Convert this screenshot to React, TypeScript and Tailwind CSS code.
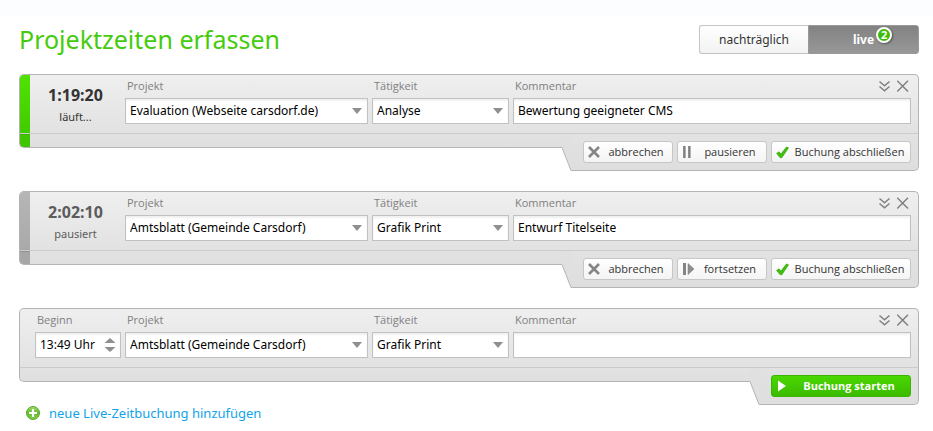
import { useId, useState } from "react";
import type { ReactNode } from "react";

type BookingStatus = "running" | "paused" | "new";

const BAR_UPPER: Record<BookingStatus, string> = {
  running: "bg-linear-to-b from-[#4fe300] to-[#42cb00]",
  paused: "bg-linear-to-b from-[#b6b6b6] to-[#a9a9a9]",
  new: "",
};

const BAR_LOWER: Record<BookingStatus, string> = {
  running: "border-[#3cb408] bg-[#40c600]",
  paused: "border-[#939393] bg-[#a6a6a6]",
  new: "",
};

function CancelIcon() {
  return (
    <svg width="12" height="12" viewBox="0 0 12 12" fill="none" stroke="#858585" strokeWidth="2.6" aria-hidden="true">
      <path d="M1 1L11 11M11 1L1 11" />
    </svg>
  );
}

function PauseIcon() {
  return (
    <svg width="12" height="12" viewBox="0 0 12 12" aria-hidden="true">
      <path d="M1 0h2v12H1zM6 0h2v12H6z" fill="#8f8f8f" />
      <path d="M2.5 0h1v12h-1zM7.5 0h1v12h-1z" fill="#6f6f6f" />
    </svg>
  );
}

function ResumeIcon() {
  return (
    <svg width="12" height="12" viewBox="0 0 12 12" aria-hidden="true">
      <path d="M1 0h3v12H1z" fill="#858585" />
      <path d="M6 0.5L12 6L6 11.5z" fill="#8f8f8f" stroke="#757575" strokeWidth="0.5" />
    </svg>
  );
}

function CheckIcon() {
  return (
    <svg width="13" height="13" viewBox="0 0 13 13" aria-hidden="true">
      <path d="M0.6 7.4L3 5.8L4.9 8.1L10.4 1L12.6 1.8L5.8 11.8L4.2 11.8z" fill="#3fc00a" stroke="#2fa006" strokeWidth="0.6" strokeLinejoin="round" />
    </svg>
  );
}

function PlayIcon() {
  return (
    <svg width="12" height="12" viewBox="0 0 12 12" aria-hidden="true">
      <path d="M2 0.5L10 6L2 11.5z" fill="#fff" />
    </svg>
  );
}

function PlusIcon() {
  return (
    <svg width="14" height="14" viewBox="0 0 14 14" aria-hidden="true">
      <defs>
        <linearGradient id="plus-fill" x1="0" y1="0" x2="0" y2="1">
          <stop offset="0" stopColor="#9fdc6c" />
          <stop offset="0.5" stopColor="#62b92c" />
          <stop offset="1" stopColor="#7fd048" />
        </linearGradient>
      </defs>
      <circle cx="7" cy="7" r="6.5" fill="url(#plus-fill)" stroke="#5aa832" />
      <path d="M7 3v8M3 7h8" stroke="#fff" strokeWidth="2.2" />
    </svg>
  );
}

function Field({ id, label, className, actions, children }: { id: string; label: string; className: string; actions?: ReactNode; children: ReactNode }) {
  return (
    <div className={className}>
      <div className="flex h-[23px] items-center justify-between px-0.5 pb-px">
        <label htmlFor={id} className="font-['Open_Sans','Noto_Sans',sans-serif] text-[11px] leading-4 text-[#808080]">
          {label}
        </label>
        {actions}
      </div>
      {children}
    </div>
  );
}

const CONTROL =
  "block h-[26px] w-full appearance-none border border-[#c0c2c2] bg-white px-1 text-xs text-black shadow-[inset_0_2px_2px_#f0f0f0] outline-none";

function SelectBox({ id, options }: { id: string; options: string[] }) {
  return (
    <div className="relative">
      <select id={id} className={CONTROL + " pr-5"}>
        {options.map((option) => (
          <option key={option}>{option}</option>
        ))}
      </select>
      <svg className="pointer-events-none absolute top-2.5 right-1.5" width="10" height="6" viewBox="0 0 10 6" aria-hidden="true">
        <path d="M0 0h10L5 6z" fill="#8f8f8f" />
      </svg>
    </div>
  );
}

function TimeBox({ id, value }: { id: string; value: string }) {
  return (
    <div className="relative">
      <input id={id} type="text" defaultValue={value} className={CONTROL + " pb-0.5"} />
      <div className="absolute inset-y-0 right-[5px] flex flex-col justify-center gap-1">
        <button type="button" aria-label="später" className="block">
          <svg width="12" height="5" viewBox="0 0 12 5" aria-hidden="true">
            <path d="M0.5 5L6 0L11.5 5z" fill="#8f8f8f" />
          </svg>
        </button>
        <button type="button" aria-label="früher" className="block">
          <svg width="12" height="5" viewBox="0 0 12 5" aria-hidden="true">
            <path d="M0.5 0L6 5L11.5 0z" fill="#8f8f8f" />
          </svg>
        </button>
      </div>
    </div>
  );
}

function ActionButton({ icon, children, wide, primary }: { icon: ReactNode; children: ReactNode; wide?: boolean; primary?: boolean }) {
  return (
    <button
      type="button"
      className={
        "flex h-[22px] items-center rounded-[3px] border pl-1 font-['Open_Sans','Noto_Sans',sans-serif] text-[11px] leading-4 whitespace-nowrap " +
        (wide ? "w-[140px] " : "w-[90px] ") +
        (primary
          ? "border-[#3cb406] bg-linear-to-b from-[#4ad800] to-[#3cba00] font-bold text-white"
          : "border-[#c6c6c6] bg-linear-to-b from-white to-[#f4f4f4] text-[#333]")
      }
    >
      {icon}
      <span className="flex-1 text-center">{children}</span>
    </button>
  );
}

interface BookingProps {
  status: BookingStatus;
  time: string;
  state?: string;
  project: string;
  activity: string;
  comment: string;
  children: ReactNode;
}

function Booking({ status, time, state, project, activity, comment, children }: BookingProps) {
  const id = useId();
  const isNew = status === "new";
  return (
    <section>
      <div className="flex overflow-hidden rounded-t-[5px] border border-[#b4b4b4] border-b-[#cbcbcb] bg-linear-to-b from-[#efefef] to-[#e2e2e2]">
        {!isNew && (
          <>
            <div className={"w-2.5 " + BAR_UPPER[status]} />
            <div className={"flex w-[91px] flex-col items-center gap-1 pt-2.5 " + (status === "running" ? "text-[#333]" : "text-[#5c5c5c]")}>
              <time className="text-base leading-5 font-bold">{time}</time>
              <span className="text-[11px] leading-4">{state}</span>
            </div>
          </>
        )}
        <div className={"flex flex-1 gap-1 pr-[7px] pb-[9px] " + (isNew ? "pl-[15px]" : "pl-1")}>
          {isNew && (
            <Field id={id + "start"} label="Beginn" className="w-[86px]">
              <TimeBox id={id + "start"} value={time} />
            </Field>
          )}
          <Field id={id + "project"} label="Projekt" className="w-[243px]">
            <SelectBox id={id + "project"} options={[project]} />
          </Field>
          <Field id={id + "activity"} label="Tätigkeit" className="w-[137px]">
            <SelectBox id={id + "activity"} options={[activity]} />
          </Field>
          <Field
            id={id + "comment"}
            label="Kommentar"
            className="flex-1"
            actions={
              <div className="flex gap-1.5">
                <button type="button" aria-label="aufklappen">
                  <svg width="12" height="12" viewBox="0 0 12 12" fill="none" stroke="#808080" strokeWidth="1.5" aria-hidden="true">
                    <path d="M0.5 1.5L5.5 5.8L10.5 1.5M0.5 6.5L5.5 10.8L10.5 6.5" />
                  </svg>
                </button>
                <button type="button" aria-label="schließen">
                  <svg width="12" height="12" viewBox="0 0 12 12" fill="none" stroke="#808080" strokeWidth="1.5" aria-hidden="true">
                    <path d="M0.2 0.7L11 11.5M11 0.7L0.2 11.5" />
                  </svg>
                </button>
              </div>
            }
          >
            <input id={id + "comment"} type="text" defaultValue={comment} className={CONTROL + " pb-0.5"} />
          </Field>
        </div>
      </div>
      <div className="flex items-start">
        <div className="flex h-3.5 flex-1 overflow-hidden rounded-bl-[5px] border-b border-l border-[#b4b4b4] bg-linear-to-b from-[#e2e2e2] to-[#dfdfdf]">
          {!isNew && <div className={"w-2.5 border-t " + BAR_LOWER[status]} />}
        </div>
        <svg width="9" height="37" viewBox="0 0 9 37" aria-hidden="true">
          <path d="M0 0H9V37L0 13.5z" fill="#e0e0e0" />
          <path d="M0 13.5L9 36.5" fill="none" stroke="#b4b4b4" />
        </svg>
        <div className="flex h-[37px] gap-1 rounded-br-[5px] border-r border-b border-[#b4b4b4] bg-linear-to-b from-[#e2e2e2] to-[#dedede] pt-[7px] pr-[7px] pl-3">
          {children}
        </div>
      </div>
    </section>
  );
}

export default function App() {
  const [mode, setMode] = useState("live");
  return (
    <main className="min-h-screen border-t-[17px] border-[#fbfdff] bg-white pr-3.5 pb-2 pl-[19px] font-['Noto_Sans',sans-serif]">
      <header className="flex items-start justify-between pt-2">
        <h1 className="text-[25px] leading-[29px] text-[#44cc0c]">Projektzeiten erfassen</h1>
        <div className="flex text-xs">
          <button
            type="button"
            aria-pressed={mode === "late"}
            onClick={() => setMode("late")}
            className="h-[29px] w-[109px] rounded-l-[3px] border border-r-0 border-[#c4c4c4] bg-linear-to-b from-white to-[#f2f2f2] text-[#333]"
          >
            nachträglich
          </button>
          <button
            type="button"
            aria-pressed={mode === "live"}
            onClick={() => setMode("live")}
            className="h-[29px] w-[111px] rounded-r-[3px] border border-[#999] bg-linear-to-b from-[#828282] to-[#989898] font-bold text-white"
          >
            <span className="relative">
              live
              <span className="absolute -top-1 left-full ml-0.5 flex size-4 items-center justify-center rounded-full border-2 border-white bg-[#3dbd08] text-[11px] leading-3 shadow-[1px_1px_2px_#555]">
                2
              </span>
            </span>
          </button>
        </div>
      </header>

      <div className="mt-5 flex flex-col gap-5">
        <Booking
          status="running"
          time="1:19:20"
          state="läuft..."
          project="Evaluation (Webseite carsdorf.de)"
          activity="Analyse"
          comment="Bewertung geeigneter CMS"
        >
          <ActionButton icon={<CancelIcon />}>abbrechen</ActionButton>
          <ActionButton icon={<PauseIcon />}>pausieren</ActionButton>
          <ActionButton icon={<CheckIcon />} wide>
            Buchung abschließen
          </ActionButton>
        </Booking>
        <Booking
          status="paused"
          time="2:02:10"
          state="pausiert"
          project="Amtsblatt (Gemeinde Carsdorf)"
          activity="Grafik Print"
          comment="Entwurf Titelseite"
        >
          <ActionButton icon={<CancelIcon />}>abbrechen</ActionButton>
          <ActionButton icon={<ResumeIcon />}>fortsetzen</ActionButton>
          <ActionButton icon={<CheckIcon />} wide>
            Buchung abschließen
          </ActionButton>
        </Booking>
        <Booking status="new" time="13:49 Uhr" project="Amtsblatt (Gemeinde Carsdorf)" activity="Grafik Print" comment="">
          <ActionButton icon={<PlayIcon />} wide primary>
            Buchung starten
          </ActionButton>
        </Booking>
      </div>

      <a href="#neu" className="ml-[7px] flex w-fit items-center gap-[9px] text-[13px] leading-4 text-[#11a3ea]">
        <PlusIcon />
        neue Live-Zeitbuchung hinzufügen
      </a>
    </main>
  );
}
